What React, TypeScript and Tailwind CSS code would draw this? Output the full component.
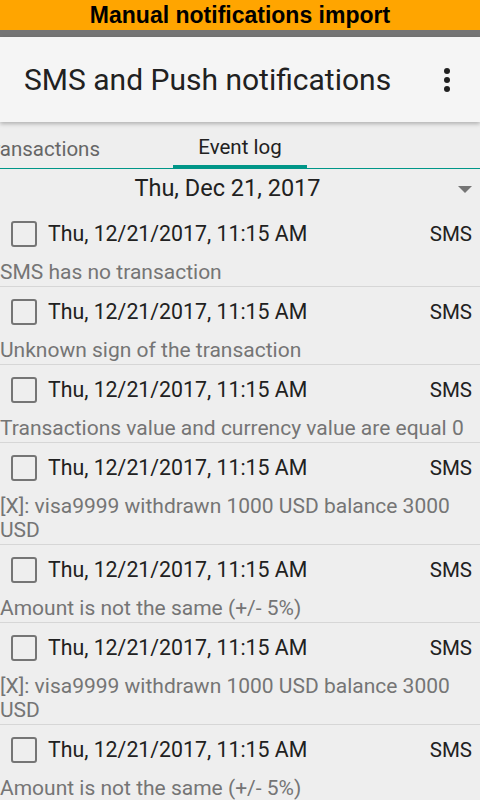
const events = [
  { date: "Thu, 12/21/2017, 11:15 AM", source: "SMS", message: "SMS has no transaction" },
  { date: "Thu, 12/21/2017, 11:15 AM", source: "SMS", message: "Unknown sign of the transaction" },
  { date: "Thu, 12/21/2017, 11:15 AM", source: "SMS", message: "Transactions value and currency value are equal 0" },
  { date: "Thu, 12/21/2017, 11:15 AM", source: "SMS", message: "[X]: visa9999 withdrawn 1000 USD balance 3000 USD" },
  { date: "Thu, 12/21/2017, 11:15 AM", source: "SMS", message: "Amount is not the same (+/- 5%)" },
  { date: "Thu, 12/21/2017, 11:15 AM", source: "SMS", message: "[X]: visa9999 withdrawn 1000 USD balance 3000 USD" },
  { date: "Thu, 12/21/2017, 11:15 AM", source: "SMS", message: "Amount is not the same (+/- 5%)" },
];

const App = () => {
  return (
    <div className="w-[480px] h-[800px] overflow-hidden bg-[#eeeeee] font-['Roboto',sans-serif]">
      {/* Banner */}
      <div className="h-[30px] bg-[#ffa500] flex items-center justify-center">
        <span className="font-['Liberation_Sans',sans-serif] font-bold text-[23px] text-black leading-none">
          Manual notifications import
        </span>
      </div>
      <div className="h-[7px] bg-[#757575]"></div>

      {/* Toolbar */}
      <div className="relative z-10 h-[85px] bg-[#f5f5f5] flex items-center justify-between pl-[24px] pr-[30px] shadow-[0_2px_4px_rgba(0,0,0,0.25)]">
        <h1 className="text-[30px] text-[#212121]">SMS and Push notifications</h1>
        <div className="flex flex-col gap-[3px]">
          <span className="w-[6px] h-[6px] rounded-full bg-[#212121]"></span>
          <span className="w-[6px] h-[6px] rounded-full bg-[#212121]"></span>
          <span className="w-[6px] h-[6px] rounded-full bg-[#212121]"></span>
        </div>
      </div>

      {/* Tabs */}
      <div className="h-[47px] flex border-b border-[#009688]">
        <div className="w-[173px] shrink-0 flex justify-end items-center pr-[73px] pt-[8px]">
          <span className="text-[20.5px] text-[#666666] whitespace-nowrap">Transactions</span>
        </div>
        <div className="w-[134px] shrink-0 flex items-center justify-center border-b-[3px] border-[#009688] pt-[8px]">
          <span className="text-[20.5px] text-[#212121]">Event log</span>
        </div>
      </div>

      {/* Date selector */}
      <div className="h-[40px] flex items-center relative">
        <span className="flex-1 text-center text-[23.5px] text-[#212121] pr-[25px]">Thu, Dec 21, 2017</span>
        <svg className="absolute right-[8px] top-[17px]" width="14" height="7" viewBox="0 0 14 7">
          <path d="M0 0 L14 0 L7 7 Z" fill="#757575" />
        </svg>
      </div>

      {/* Event list */}
      <ul>
        {events.map((item, index) => (
          <li key={index} className={index > 0 ? "border-t border-[#d6d6d6]" : ""}>
            <div className="pt-[10px] pb-[2px]">
              <div className="h-[30px] flex items-center pl-[11px] pr-[8px]">
                <span className="w-[26px] h-[26px] border-2 border-[#757575] rounded-[3px] shrink-0"></span>
                <span className="ml-[11px] text-[21.3px] text-[#212121] flex-1">{item.date}</span>
                <span className="text-[20.5px] text-[#212121]">{item.source}</span>
              </div>
              <p className="mt-[11px] text-[21px] leading-[24px] text-[#757575] pr-[10px]">{item.message}</p>
            </div>
          </li>
        ))}
      </ul>
    </div>
  );
};

export default App;
